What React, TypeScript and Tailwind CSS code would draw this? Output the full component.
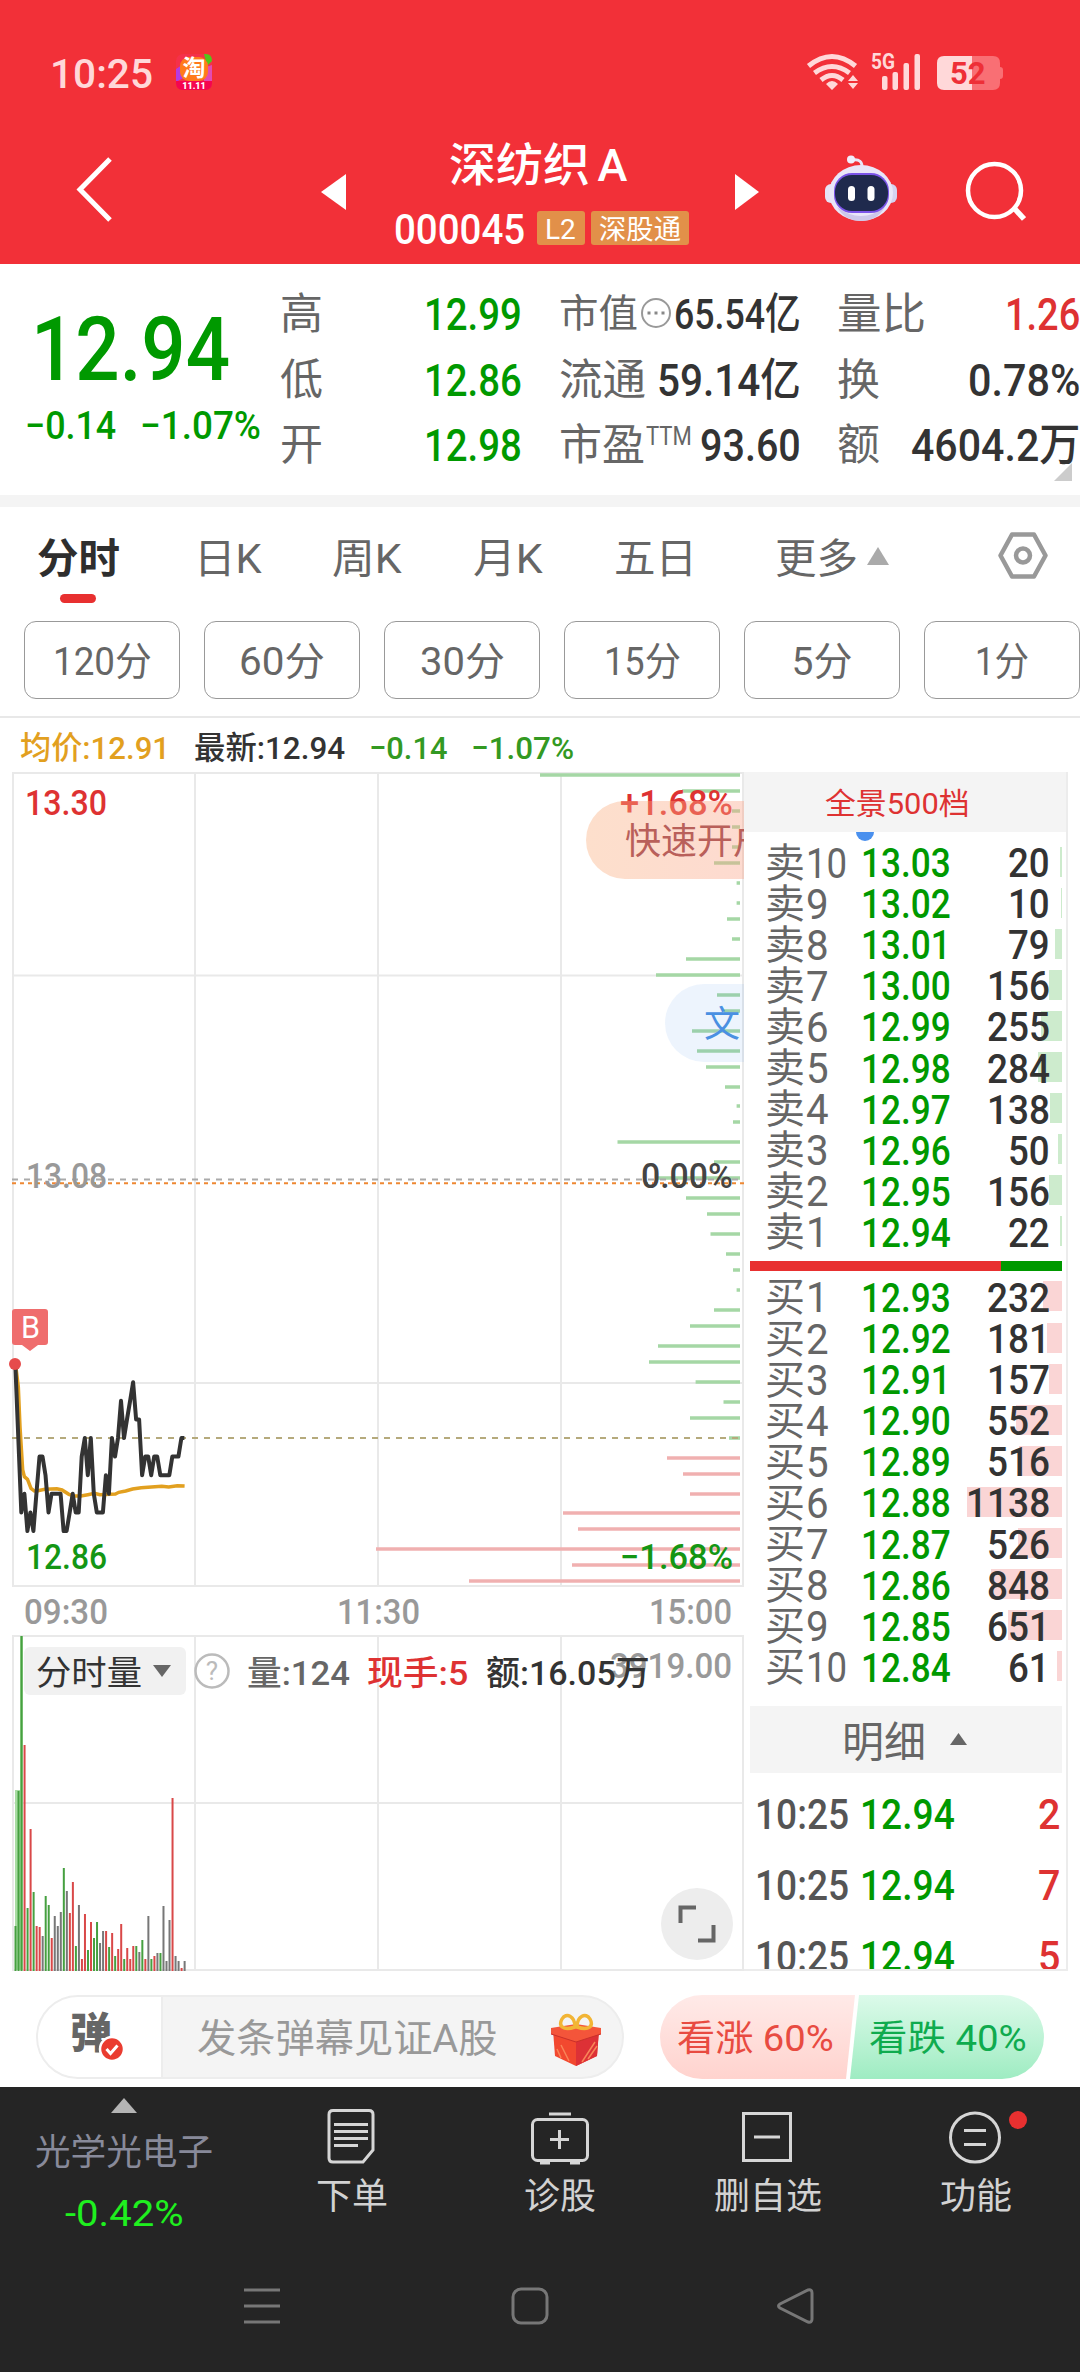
import { useLayoutEffect, useRef, useState } from "react";
import type { ReactNode } from "react";

// Text squeezed or stretched to the narrow proportions of the quote typeface
function Fit({ w, className = "", children }: { w: number; className?: string; children: ReactNode }) {
  const ref = useRef<HTMLSpanElement>(null);
  const [ratio, setRatio] = useState(1);

  useLayoutEffect(() => {
    if (ref.current) setRatio(w / ref.current.offsetWidth);
  }, [w]);

  return (
    <span className={`inline-flex shrink-0 translate-y-[1.500px] whitespace-nowrap ${className}`} style={{ width: w }}>
      <span ref={ref} className="inline-block shrink-0 origin-left" style={{ transform: `scaleX(${ratio})` }}>
        {children}
      </span>
    </span>
  );
}

const asks = [
  ["10", "13.03", 20],
  ["9", "13.02", 10],
  ["8", "13.01", 79],
  ["7", "13.00", 156],
  ["6", "12.99", 255],
  ["5", "12.98", 284],
  ["4", "12.97", 138],
  ["3", "12.96", 50],
  ["2", "12.95", 156],
  ["1", "12.94", 22],
] as const;

const bids = [
  ["1", "12.93", 232],
  ["2", "12.92", 181],
  ["3", "12.91", 157],
  ["4", "12.90", 552],
  ["5", "12.89", 516],
  ["6", "12.88", 1138],
  ["7", "12.87", 526],
  ["8", "12.86", 848],
  ["9", "12.85", 651],
  ["10", "12.84", 61],
] as const;

const trades = [2, 7, 5];

// One price per minute since 09:30
const prices = [
  12.98, 12.94, 12.9, 12.91, 12.89, 12.9, 12.89, 12.91, 12.93, 12.93, 12.92, 12.9, 12.91, 12.91, 12.91, 12.91, 12.89,
  12.89, 12.9, 12.91, 12.9, 12.9, 12.93, 12.94, 12.92, 12.94, 12.91, 12.9, 12.9, 12.9, 12.92, 12.91, 12.94, 12.93,
  12.94, 12.96, 12.94, 12.95, 12.96, 12.97, 12.95, 12.95, 12.92, 12.93, 12.93, 12.92, 12.93, 12.93, 12.92, 12.92,
  12.92, 12.92, 12.93, 12.93, 12.93, 12.94, 12.94,
];

const average =
  "15.5,592 18.3,614.7 20,654.7 22.7,698 24.4,704.7 27.5,707.3 31,716.3 34.4,719 37.9,718.7 44.8,717.3 56.8,716.7 62,718 68.9,722.3 74,724 80.9,724 87.8,722.7 94.7,721.3 99.9,722.7 115.4,722 118.8,720.3 125.7,719 132.6,717 141.2,715.7 151.5,715 161.8,714.3 168.7,715 177.3,713.7 184.6,714";

const volumes =
  "g45 g180 g335 r226 g63 r142 g79 r45 r44 k35 g75 g66 r33 k55 k45 k59 g103 k80 r58 r89 g25 k66 r12 r57 g21 r49 g33 g49 k28 k40 r40 g24 r38 g15 r22 r47 g12 r23 r12 r25 g25 k19 g31 r12 k55 g12 r15 k18 g18 k65 k10 k51 r173 k15 k10 r3 k10".split(
    " ",
  );

// Order depth lines: [y, left edge]
const sellDepth = [
  [3, 540], [19, 682], [39, 732], [55, 732], [75, 732], [91, 714], [111, 736.6], [131, 736.6], [147, 727],
  [167, 732], [187, 686], [203, 656], [223, 717], [239, 724], [259, 692], [279, 697], [295, 706], [315, 725],
  [334, 736.6], [350, 733], [370, 617.5], [390, 714], [406, 657], [426, 686], [442, 707], [462, 710.5],
  [482, 726], [498, 733], [518, 736.6], [538, 714], [554, 690], [574, 658], [590, 649], [610, 695.6],
  [630, 723.5], [646, 690], [666, 729],
];
const buyDepth = [
  [686, 667], [702, 683], [722, 690], [741, 563], [757, 578], [777, 376], [793, 572], [809, 469],
];

function StatusBar() {
  return (
    <div className="flex h-[144px] items-center pl-[50px] text-[#ffd8d9]">
      <Fit w={103} className="text-[41px] font-medium">10:25</Fit>
      <svg className="ml-[23px]" width="36" height="36" viewBox="0 0 36 36">
        <rect width="36" height="36" rx="7" fill="#f5304a" />
        <path d="M0 15 9 9v14L0 28z" fill="#b53ae0" />
        <path d="M28 0h2q6 0 6 7l-5 5z" fill="#52c41a" />
        <path d="M27 14l9-3v16h-8z" fill="#e34bb1" />
        <rect x="4" y="3" width="28" height="24" rx="9" fill="#ff7a1c" />
        <path d="M0 27h36v2q0 7-7 7H7q-7 0-7-7z" fill="#f5054f" />
        <text x="18" y="22" textAnchor="middle" fontSize="23" fontWeight="700" fill="#fff">淘</text>
        <text x="18" y="35" textAnchor="middle" fontSize="9" fontWeight="900" fill="#fff">11.11</text>
      </svg>
      <svg className="ml-[594px]" width="200" height="38" viewBox="806 53 200 38" fill="none">
        <g stroke="#ffd8d9" strokeWidth="5">
          <path d="M808.500 66q23.500-19 47 0M814.500 73q17.500-13 35 0M821 80q11-9 22 0" />
        </g>
        <path d="M832 90l-6-6q6-6 12 0zM853 75l5 6h-10zM853 89l5-6h-10z" fill="#ffd8d9" />
        <text x="871" y="69" fontSize="22" fontWeight="700" fill="#ffd8d9" textLength="24" lengthAdjust="spacingAndGlyphs">5G</text>
        <g fill="#ffd8d9">
          <rect x="882" y="76" width="5.500" height="14" rx="2" />
          <rect x="892.500" y="72" width="5.500" height="18" rx="2" />
          <rect x="903.500" y="63" width="5.500" height="27" rx="2" />
          <rect x="914.500" y="54" width="5.500" height="36" rx="2" />
        </g>
        <path d="M972 56h21q7 0 7 7v4q3 0 3 3v6q0 3-3 3v4q0 7-7 7h-21z" fill="#f96f74" />
        <path d="M972 56h-28q-7 0-7 7v20q0 7 7 7h28z" fill="#ffd8d9" />
        <text x="950" y="84" fontSize="31" fontWeight="700" fill="#ee2f37">52</text>
      </svg>
    </div>
  );
}

function Robot() {
  return (
    <svg width="72" height="68" viewBox="0 0 72 68">
      <path d="M27 5q11-2 10 9" fill="none" stroke="#e9e6f8" strokeWidth="3" />
      <circle cx="26" cy="4.500" r="4" fill="#f1eefc" />
      <rect x="0" y="29" width="14" height="19" rx="6" fill="#e6e3f6" />
      <rect x="58" y="29" width="14" height="19" rx="6" fill="#d5d2f0" />
      <ellipse cx="36" cy="38" rx="32" ry="28" fill="#e9e6f8" />
      <path d="M12 52q24 18 48 0-8 14-24 14T12 52" fill="#cdc8ea" />
      <rect x="9" y="18" width="55" height="40" rx="18" fill="#7b54e8" />
      <rect x="10" y="20" width="53" height="36" rx="17" fill="#1f2a4d" />
      <rect x="23" y="31" width="7" height="15" rx="3.500" fill="#fff" />
      <rect x="42.500" y="31" width="7" height="15" rx="3.500" fill="#fff" />
    </svg>
  );
}

function TitleBar() {
  return (
    <div className="flex h-[120px] items-start text-white">
      <svg className="mt-[13px] ml-[75px]" width="38" height="66" viewBox="0 0 38 66" fill="none" stroke="#fff" strokeWidth="5">
        <path d="M35 2 5 32.500 35 63" />
      </svg>
      <svg className="mt-[30px] ml-[208px]" width="25" height="36">
        <path d="M25 0v36L0 18z" fill="#fff" />
      </svg>
      <div className="ml-[45px] flex w-[300px] flex-col items-center">
        <div className="-mt-[3px] flex h-[44px] items-center pr-[6px] text-[46px] font-medium">
          <Fit w={141}>深纺织</Fit>
          <Fit w={30} className="ml-[8px] text-[45px]">A</Fit>
        </div>
        <div className="mt-[23px] flex h-[40px] items-center">
          <Fit w={131} className="text-[42px] font-medium">000045</Fit>
          <span className="ml-[12px] flex h-[34px] w-[48px] items-center justify-center rounded-[3px] bg-[#e29049] text-[28px]">
            <Fit w={31}>L2</Fit>
          </span>
          <span className="ml-[6px] flex h-[34px] w-[98px] items-center justify-center rounded-[3px] bg-[#e29049] text-[27px]">
            <Fit w={82}>深股通</Fit>
          </span>
        </div>
      </div>
      <svg className="mt-[30px] ml-[44px]" width="25" height="36">
        <path d="M0 0v36l24-18z" fill="#fff" />
      </svg>
      <div className="mt-[11px] ml-[65px]">
        <Robot />
      </div>
      <svg className="mt-[17px] ml-[67px]" width="62" height="62" viewBox="0 0 62 62" fill="none" stroke="#fff" strokeWidth="4.500">
        <circle cx="30.500" cy="29.500" r="26.500" />
        <path d="M50 47l10 11" strokeWidth="5.500" />
      </svg>
    </div>
  );
}

function QuotePanel() {
  return (
    <section className="flex h-[231px] pt-[16px]">
      <div className="w-[280px] text-[#009900]">
        <Fit w={199} className="mt-[23px] ml-[31px] h-[88px] items-center text-[89px] font-medium">12.94</Fit>
        <div className="mt-[13px] flex h-[40px] items-center text-[39px] font-medium">
          <Fit w={91} className="ml-[25px]">−0.14</Fit>
          <Fit w={121} className="ml-[24px]">−1.07%</Fit>
        </div>
      </div>
      <div className="w-[242px] text-[43px]">
        {[["高", "12.99"], ["低", "12.86"], ["开", "12.98"]].map(([label, value]) => (
          <div key={label} className="flex h-[65.500px] items-center justify-between text-[#666]">
            <Fit w={43}>{label}</Fit>
            <Fit w={98} className="text-[45px] font-medium text-[#009900]">{value}</Fit>
          </div>
        ))}
      </div>
      <div className="ml-[37px] w-[242px] text-[43px] text-[#666]">
        <div className="flex h-[65.500px] items-center justify-between">
          <Fit w={79} className="text-[39px]">市值</Fit>
          <svg className="mt-[3px]" width="30" height="32" viewBox="0 0 30 32">
            <circle cx="15" cy="15" r="14" fill="none" stroke="#999" strokeWidth="2" />
            <path d="M6.500 15h3M13.500 15h3M20.500 15h3" stroke="#888" strokeWidth="3" />
          </svg>
          <Fit w={127} className="text-[43px] font-medium text-[#333]">65.54亿</Fit>
        </div>
        <div className="flex h-[65.500px] items-center justify-between">
          <Fit w={87}>流通</Fit>
          <Fit w={144} className="text-[45px] font-medium text-[#333]">59.14亿</Fit>
        </div>
        <div className="flex h-[65.500px] items-center">
          <Fit w={86}>市盈</Fit>
          <Fit w={46} className="mb-[18px] ml-px text-[25px]">TTM</Fit>
          <Fit w={101} className="ml-[8px] text-[45px] font-medium text-[#333]">93.60</Fit>
        </div>
      </div>
      <div className="relative ml-[36px] w-[243px] text-[43px] text-[#666]">
        <div className="flex h-[65.500px] items-center justify-between">
          <Fit w={89}>量比</Fit>
          <Fit w={75} className="text-[45px] font-medium text-[#de3232]">1.26</Fit>
        </div>
        <div className="flex h-[65.500px] items-center justify-between">
          <Fit w={43}>换</Fit>
          <Fit w={112} className="text-[45px] font-medium text-[#333]">0.78%</Fit>
        </div>
        <div className="flex h-[65.500px] items-center justify-between">
          <Fit w={43}>额</Fit>
          <Fit w={169} className="text-[45px] font-medium text-[#333]">4604.2万</Fit>
        </div>
        <svg className="absolute top-[183px] right-[8px]" width="18" height="18">
          <path d="M18 0v18H0z" fill="#ccc" />
        </svg>
      </div>
    </section>
  );
}

function PeriodTabs() {
  return (
    <>
      <nav className="flex h-[114px] items-start pt-[29px] text-[41px] text-[#666]">
        <div className="ml-[37px] flex w-[82px] flex-col items-center">
          <Fit w={83} className="h-[42px] items-center font-bold text-[#2e2e2e]">分时</Fit>
          <span className="mt-[16px] h-[9px] w-[36px] rounded-full bg-[#e83030]" />
        </div>
        <Fit w={68} className="ml-[75px] h-[42px] items-center">日K</Fit>
        <Fit w={70} className="ml-[70px] h-[42px] items-center">周K</Fit>
        <Fit w={70} className="ml-[71px] h-[42px] items-center">月K</Fit>
        <Fit w={83} className="ml-[71px] h-[42px] items-center">五日</Fit>
        <Fit w={83} className="ml-[78px] h-[42px] items-center">更多</Fit>
        <svg className="mt-[11px] ml-[8px]" width="24" height="19">
          <path d="M12 0 23 18H1z" fill="#aaa" />
        </svg>
        <svg className="-mt-[4px] ml-[108px]" width="50" height="47" viewBox="0 0 50 47" fill="none" stroke="#999" strokeWidth="4.500" strokeLinejoin="round">
          <path d="M14 2.500h22l11.500 21L36 44.500H14L2.500 23.500z" />
          <circle cx="25" cy="23.500" r="7" />
        </svg>
      </nav>
      <div className="flex h-[97px] gap-[24px] overflow-hidden border-b-2 border-[#e8e8e8] pl-[24px]">
        {[["120分", 99], ["60分", 86], ["30分", 85], ["15分", 77], ["5分", 61], ["1分", 54]].map(([label, w]) => (
          <button
            key={label}
            className="flex h-[78px] w-[156px] shrink-0 items-center justify-center rounded-[12px] border border-[#999] pt-px text-[39px] text-[#666]"
          >
            <Fit w={w as number}>{label}</Fit>
          </button>
        ))}
      </div>
    </>
  );
}

function Grid({ top, bottom, lines }: { top: number; bottom: number; lines: number[] }) {
  return (
    <g stroke="#e9e9e9" strokeWidth="2">
      {[13, 195, 378, 561, 743].map((x) => (
        <path key={x} d={`M${x} ${top}V${bottom}`} />
      ))}
      {lines.map((y) => (
        <path key={y} d={`M12 ${y}H744`} />
      ))}
    </g>
  );
}

function Label({ x, y, w, fill, children }: { x: number; y: number; w: number; fill: string; children: string }) {
  return (
    <text x={x} y={y} textLength={w} lengthAdjust="spacingAndGlyphs" fill={fill}>
      {children}
    </text>
  );
}

function Charts() {
  const line = prices.map((p, i) => `${(15.3 + i * 3.02).toFixed(1)},${(666 + (12.94 - p) * 1860).toFixed(1)}`).join(" ");
  const tone: Record<string, string> = { g: "#46a040", r: "#d94848", k: "#777" };

  return (
    <svg className="block" width="744" height="1200" viewBox="0 0 744 1200" fontSize="35" fontWeight="500">
      <Grid top={1} bottom={815} lines={[1, 203.5, 611, 814]} />
      <Grid top={864} bottom={1199} lines={[864, 1031, 1198]} />

      <g strokeWidth="3.500">
        {sellDepth.map(([y, x]) => (
          <path key={y} d={`M${x} ${y}H740`} stroke="#a5d7a5" />
        ))}
        {buyDepth.map(([y, x]) => (
          <path key={y} d={`M${x} ${y}H740`} stroke="#f0b0b0" />
        ))}
      </g>

      <path d="M12 407.500H740" stroke="#aaa" strokeWidth="2" strokeDasharray="6 6" />
      <path d="M12 411.300H744" stroke="#ee8833" strokeWidth="2" strokeDasharray="4 4" />
      <path d="M12 666H740" stroke="#b5aa7c" strokeWidth="2" strokeDasharray="6 6" />

      <Label x={25} y={43} w={82} fill="#de3232">13.30</Label>
      <Label x={620} y={43} w={113} fill="#de3232">+1.68%</Label>
      <Label x={26} y={416} w={81} fill="#999">13.08</Label>
      <Label x={641} y={416} w={92} fill="#444">0.00%</Label>
      <Label x={26} y={797} w={81} fill="#149614">12.86</Label>
      <Label x={620} y={797} w={113} fill="#149614">−1.68%</Label>
      <Label x={24} y={852} w={84} fill="#999">09:30</Label>
      <Label x={337} y={852} w={83} fill="#999">11:30</Label>
      <Label x={649} y={852} w={83} fill="#999">15:00</Label>
      <Label x={610} y={906} w={122} fill="#999">3919.00</Label>

      <polyline points={average} fill="none" stroke="#e2a01f" strokeWidth="3.500" />
      <polyline points={line} fill="none" stroke="#333" strokeWidth="4" strokeLinejoin="round" />
      <circle cx="15" cy="592" r="6" fill="#e64b4b" />
      <path d="M15 537h30q3 0 3 3v30q0 3-3 3h-7l-8 6-8-6h-7q-3 0-3-3v-30q0-3 3-3z" fill="#ef6d6d" />
      <text x="21" y="566" fontSize="32" fontWeight="400" fill="#fff" textLength="19" lengthAdjust="spacingAndGlyphs">B</text>

      <path d="M15 1198V1018h5V864h3v334z" fill="#a9dca3" />
      {volumes.map((v, i) => {
        const h = Number(v.slice(1));
        return <rect key={i} x={14.5 + i * 3.02} y={1199 - h} width="2" height={h} fill={tone[v[0]]} />;
      })}
    </svg>
  );
}

function ChartArea() {
  return (
    <div className="relative w-[744px] shrink-0 overflow-hidden">
      <Charts />
      {/* Shortcut pills sliding out behind the order book */}
      <div className="absolute top-[29px] left-[586px] flex h-[78px] w-[220px] items-center rounded-full bg-linear-to-r from-[#faaf7f]/40 to-[#fa9f8c]/40 pt-[3px] pl-[39px] text-[36px] whitespace-nowrap text-[#b9605a]">
        快速开户
      </div>
      <div className="absolute top-[212px] left-[665px] flex h-[78px] w-[200px] items-center rounded-full bg-[#4a90ee]/10 pt-[3px] pl-[39px] text-[36px] text-[#4a90e2]">
        文
      </div>
      <div className="absolute top-[875px] left-[24px] flex h-[48px] items-center text-[34px]">
        <div className="flex h-full w-[162px] items-center rounded-[6px] bg-[#f1f1f1] pl-[12px] text-[#333]">
          <Fit w={106}>分时量</Fit>
          <svg className="ml-[11px]" width="18" height="12">
            <path d="M0 0h18L9 12z" fill="#666" />
          </svg>
        </div>
        <svg className="ml-[8px]" width="36" height="36" viewBox="0 0 36 36">
          <circle cx="18" cy="18" r="16.500" fill="none" stroke="#bbb" strokeWidth="2.500" />
          <text x="18" y="27" textAnchor="middle" fontSize="26" fill="#bbb">?</text>
        </svg>
        <Fit w={103} className="ml-[17px] font-medium text-[#666]">量:124</Fit>
        <Fit w={101} className="ml-[17px] font-medium text-[#de3232]">现手:5</Fit>
        <Fit w={164} className="ml-[18px] font-medium text-[#333]">额:16.05万</Fit>
      </div>
      <div className="absolute top-[1116px] left-[661px] flex size-[72px] items-center justify-center rounded-full bg-[#ededed]">
        <svg width="38" height="38" viewBox="0 0 38 38" fill="none" stroke="#666" strokeWidth="4">
          <path d="M2.500 18V2.500H18M35.500 20v15.500H20" />
        </svg>
      </div>
    </div>
  );
}

function DepthRow({ side, level, price, volume }: { side: string; level: string; price: string; volume: number }) {
  return (
    <div className="relative flex h-[41.100px] items-center pl-[15px]">
      <span className="flex w-[96px] items-center text-[40px] text-[#666]">
        <Fit w={40}>{side}</Fit>
        <Fit w={level === "10" ? 41 : 23} className="ml-px text-[42px]">{level}</Fit>
      </span>
      <Fit w={90} className="text-[41px] font-medium text-[#009900]">{price}</Fit>
      <span
        className={`absolute right-0 h-[30px] ${side === "卖" ? "bg-[#cdebcd]" : "bg-[#fad5d5]"}`}
        style={{ width: Math.max(1, (volume * 95) / 1138) }}
      />
      <span className="absolute right-[12px] text-[41px] font-medium text-[#333]">
        <Fit w={String(volume).length * 21}>{volume}</Fit>
      </span>
    </div>
  );
}

function OrderBook() {
  return (
    <aside className="flex h-[1199px] w-[324px] flex-col overflow-hidden border-r-2 border-b-2 border-[#ececec]">
      <div className="-mr-px flex h-[60px] shrink-0 items-center justify-center bg-[#f4f4f4] pr-[16px]">
        <Fit w={145} className="text-[30px] text-[#de3232]">全景500档</Fit>
      </div>
      <div className="ml-[112px] h-[9px] w-[18px] shrink-0 rounded-b-full bg-[#4a90ee]" />
      <div className="mr-[4px] ml-[6px]">
        {asks.map(([level, price, volume]) => (
          <DepthRow key={level} side="卖" level={level} price={price} volume={volume} />
        ))}
        <div className="mt-[9px] mb-[5px] flex h-[10px]">
          <span className="w-[251px] bg-[#e83030]" />
          <span className="flex-1 bg-[#009900]" />
        </div>
        {bids.map(([level, price, volume]) => (
          <DepthRow key={level} side="买" level={level} price={price} volume={volume} />
        ))}
        <div className="mt-[19px] mb-[4px] flex h-[67px] items-center bg-[#f4f4f4] pt-[3px] pl-[92px] text-[#666]">
          <Fit w={84} className="text-[42px]">明细</Fit>
          <svg className="ml-[24px] -mt-[3px]" width="17" height="12">
            <path d="M8.500 0 17 12H0z" fill="#666" />
          </svg>
        </div>
        {trades.map((n) => (
          <div key={n} className="flex h-[71px] items-center pl-[5px] text-[43px] font-medium">
            <Fit w={94} className="text-[#555]">10:25</Fit>
            <Fit w={95} className="ml-[11px] text-[#009900]">12.94</Fit>
            <span className="flex-1" />
            <Fit w={22} className="mr-[2px] text-[#de3232]">{n}</Fit>
          </div>
        ))}
      </div>
    </aside>
  );
}

function Gift() {
  return (
    <svg width="50" height="54" viewBox="0 0 50 54">
      <path d="M2 17h46l-2 26-21 10L4 43z" fill="#f2482f" />
      <path d="M25 22 48 17l-2 26-21 10z" fill="#dd3136" />
      <path d="M0 15 25 11l25 4v6l-25 8L0 21z" fill="#f4553a" />
      <path d="M0 21l25 8 25-8" fill="none" stroke="#c9302a" strokeWidth="1" />
      <path d="M31 49 44 29M37 46l9-13M10 32l8 16M6 36l4 9" stroke="#f98558" strokeWidth="1.500" />
      <g fill="none" stroke="#f2b535" strokeWidth="3.500">
        <path d="M24 14C12 18 7 13 11 6s13-3 13 8zM26 14c12 4 17-1 13-8s-13-3-13 8z" />
      </g>
    </svg>
  );
}

function BarrageBar() {
  return (
    <section className="flex h-[115px] items-start pt-[23px] pl-[36px]">
      <div className="flex h-[84px] w-[588px] items-center overflow-hidden rounded-full border-2 border-[#ededed] bg-[#f4f4f4]">
        <div className="relative flex h-full w-[125px] shrink-0 items-center border-r-2 border-[#ededed] bg-white pb-[7px] pl-[32px]">
          <span className="text-[42px] font-black text-[#666]">弹</span>
          <svg className="absolute top-[38px] left-[60px]" width="28" height="28" viewBox="0 0 28 28">
            <circle cx="14" cy="14" r="12" fill="#ea3c30" stroke="#fff" strokeWidth="2.500" />
            <path d="M8.500 14l4 4.500 7-8" fill="none" stroke="#fff" strokeWidth="3" />
          </svg>
        </div>
        <Fit w={300} className="ml-[34px] text-[39px] text-[#999]">发条弹幕见证A股</Fit>
        <div className="mt-[6px] ml-[54px]">
          <Gift />
        </div>
      </div>
      <div className="ml-[36px] flex h-[84px] w-[384px] overflow-hidden rounded-full text-[36px]">
        <div className="flex w-[195px] items-center bg-linear-to-b from-[#ffeae8] to-[#ffd3ce] pl-[17px] text-[#e84b41] [clip-path:polygon(0_0,100%_0,186px_100%,0_100%)]">
          <Fit w={157}>看涨 60%</Fit>
        </div>
        <div className="-ml-[5px] flex w-[194px] items-center bg-linear-to-b from-[#dcfaea] to-[#9eecc2] pl-[19px] text-[#0fab4e] [clip-path:polygon(9px_0,100%_0,100%_100%,0_100%)]">
          <Fit w={158}>看跌 40%</Fit>
        </div>
      </div>
    </section>
  );
}

function BottomBar() {
  const items = [
    {
      label: "下单",
      icon: (
        <>
          <path d="M10 2.500h36q4 0 4 4V42L40 54H10q-4 0-4-4V6.500q0-4 4-4z" />
          <path d="M11 16.500h34M11 23.500h34M11 30.500h34M11 37.500h24" />
        </>
      ),
    },
    {
      label: "诊股",
      icon: (
        <>
          <rect x="1.500" y="11.500" width="55" height="41" rx="5" />
          <path d="M18 6h22M28.500 22v19M19 31.500h19M9 55h10M39 55h10" />
        </>
      ),
    },
    {
      label: "删自选",
      icon: (
        <>
          <rect x="4.500" y="5.500" width="47" height="47" />
          <path d="M15 29h26" />
        </>
      ),
    },
    {
      label: "功能",
      icon: (
        <>
          <circle cx="28" cy="29.500" r="24.500" />
          <path d="M17 22.500h22M17 36.500h22" />
        </>
      ),
    },
  ];

  return (
    <footer className="h-[285px] bg-[#252525]">
      <div className="flex h-[174px]">
        <div className="flex w-[248px] flex-col items-center pt-[11px]">
          <svg width="28" height="15">
            <path d="M14 0 27 15H1z" fill="#b4b4b4" />
          </svg>
          <Fit w={178} className="mt-[20px] text-[36px] text-[#888a9a]">光学光电子</Fit>
          <Fit w={118} className="mt-[24px] text-[37px] text-[#1ff01f]">-0.42%</Fit>
        </div>
        {items.map(({ label, icon }) => (
          <div key={label} className="relative flex w-[208px] flex-col items-center pt-[21px] text-[36px] text-[#d2d2d2]">
            <svg width="58" height="58" viewBox="0 0 58 58" fill="none" stroke="#d6d6d6" strokeWidth="3">
              {icon}
            </svg>
            <span className="mt-[13px]">{label}</span>
            {label === "功能" && <i className="absolute top-[24px] left-[137px] size-[18px] rounded-full bg-[#e83030]" />}
          </div>
        ))}
      </div>
      <div className="flex items-center pt-[26px] pl-[243px]">
        <svg width="38" height="38" stroke="#777" strokeWidth="3">
          <path d="M1 3h36M1 19h36M1 35h36" />
        </svg>
        <svg className="ml-[230px]" width="38" height="38" fill="none" stroke="#777" strokeWidth="3">
          <rect x="2" y="2" width="34" height="34" rx="8" />
        </svg>
        <svg className="ml-[227px]" width="38" height="38" fill="none" stroke="#777" strokeWidth="3">
          <path d="M32 3q4-1 4 3v26q0 4-4 3L4 21q-3-2 0-4z" />
        </svg>
      </div>
    </footer>
  );
}

export default function App() {
  return (
    <main className="h-[2372px] w-[1080px] overflow-hidden bg-white font-['Roboto','Noto_Sans_CJK_SC',sans-serif] leading-none">
      <header className="h-[264px] bg-[#f23038]">
        <StatusBar />
        <TitleBar />
      </header>
      <QuotePanel />
      <div className="h-[12px] bg-[#f4f4f4]" />
      <PeriodTabs />
      <div className="flex h-[54px] items-center pt-px pl-[20px] text-[32px] font-medium">
        <Fit w={150} className="text-[#e2a01f]">均价:12.91</Fit>
        <Fit w={151} className="ml-[24px] text-[#333]">最新:12.94</Fit>
        <Fit w={78} className="ml-[24px] text-[#339922]">−0.14</Fit>
        <Fit w={103} className="ml-[24px] text-[#339922]">−1.07%</Fit>
      </div>
      <div className="flex h-[1200px]">
        <ChartArea />
        <OrderBook />
      </div>
      <BarrageBar />
      <BottomBar />
    </main>
  );
}
